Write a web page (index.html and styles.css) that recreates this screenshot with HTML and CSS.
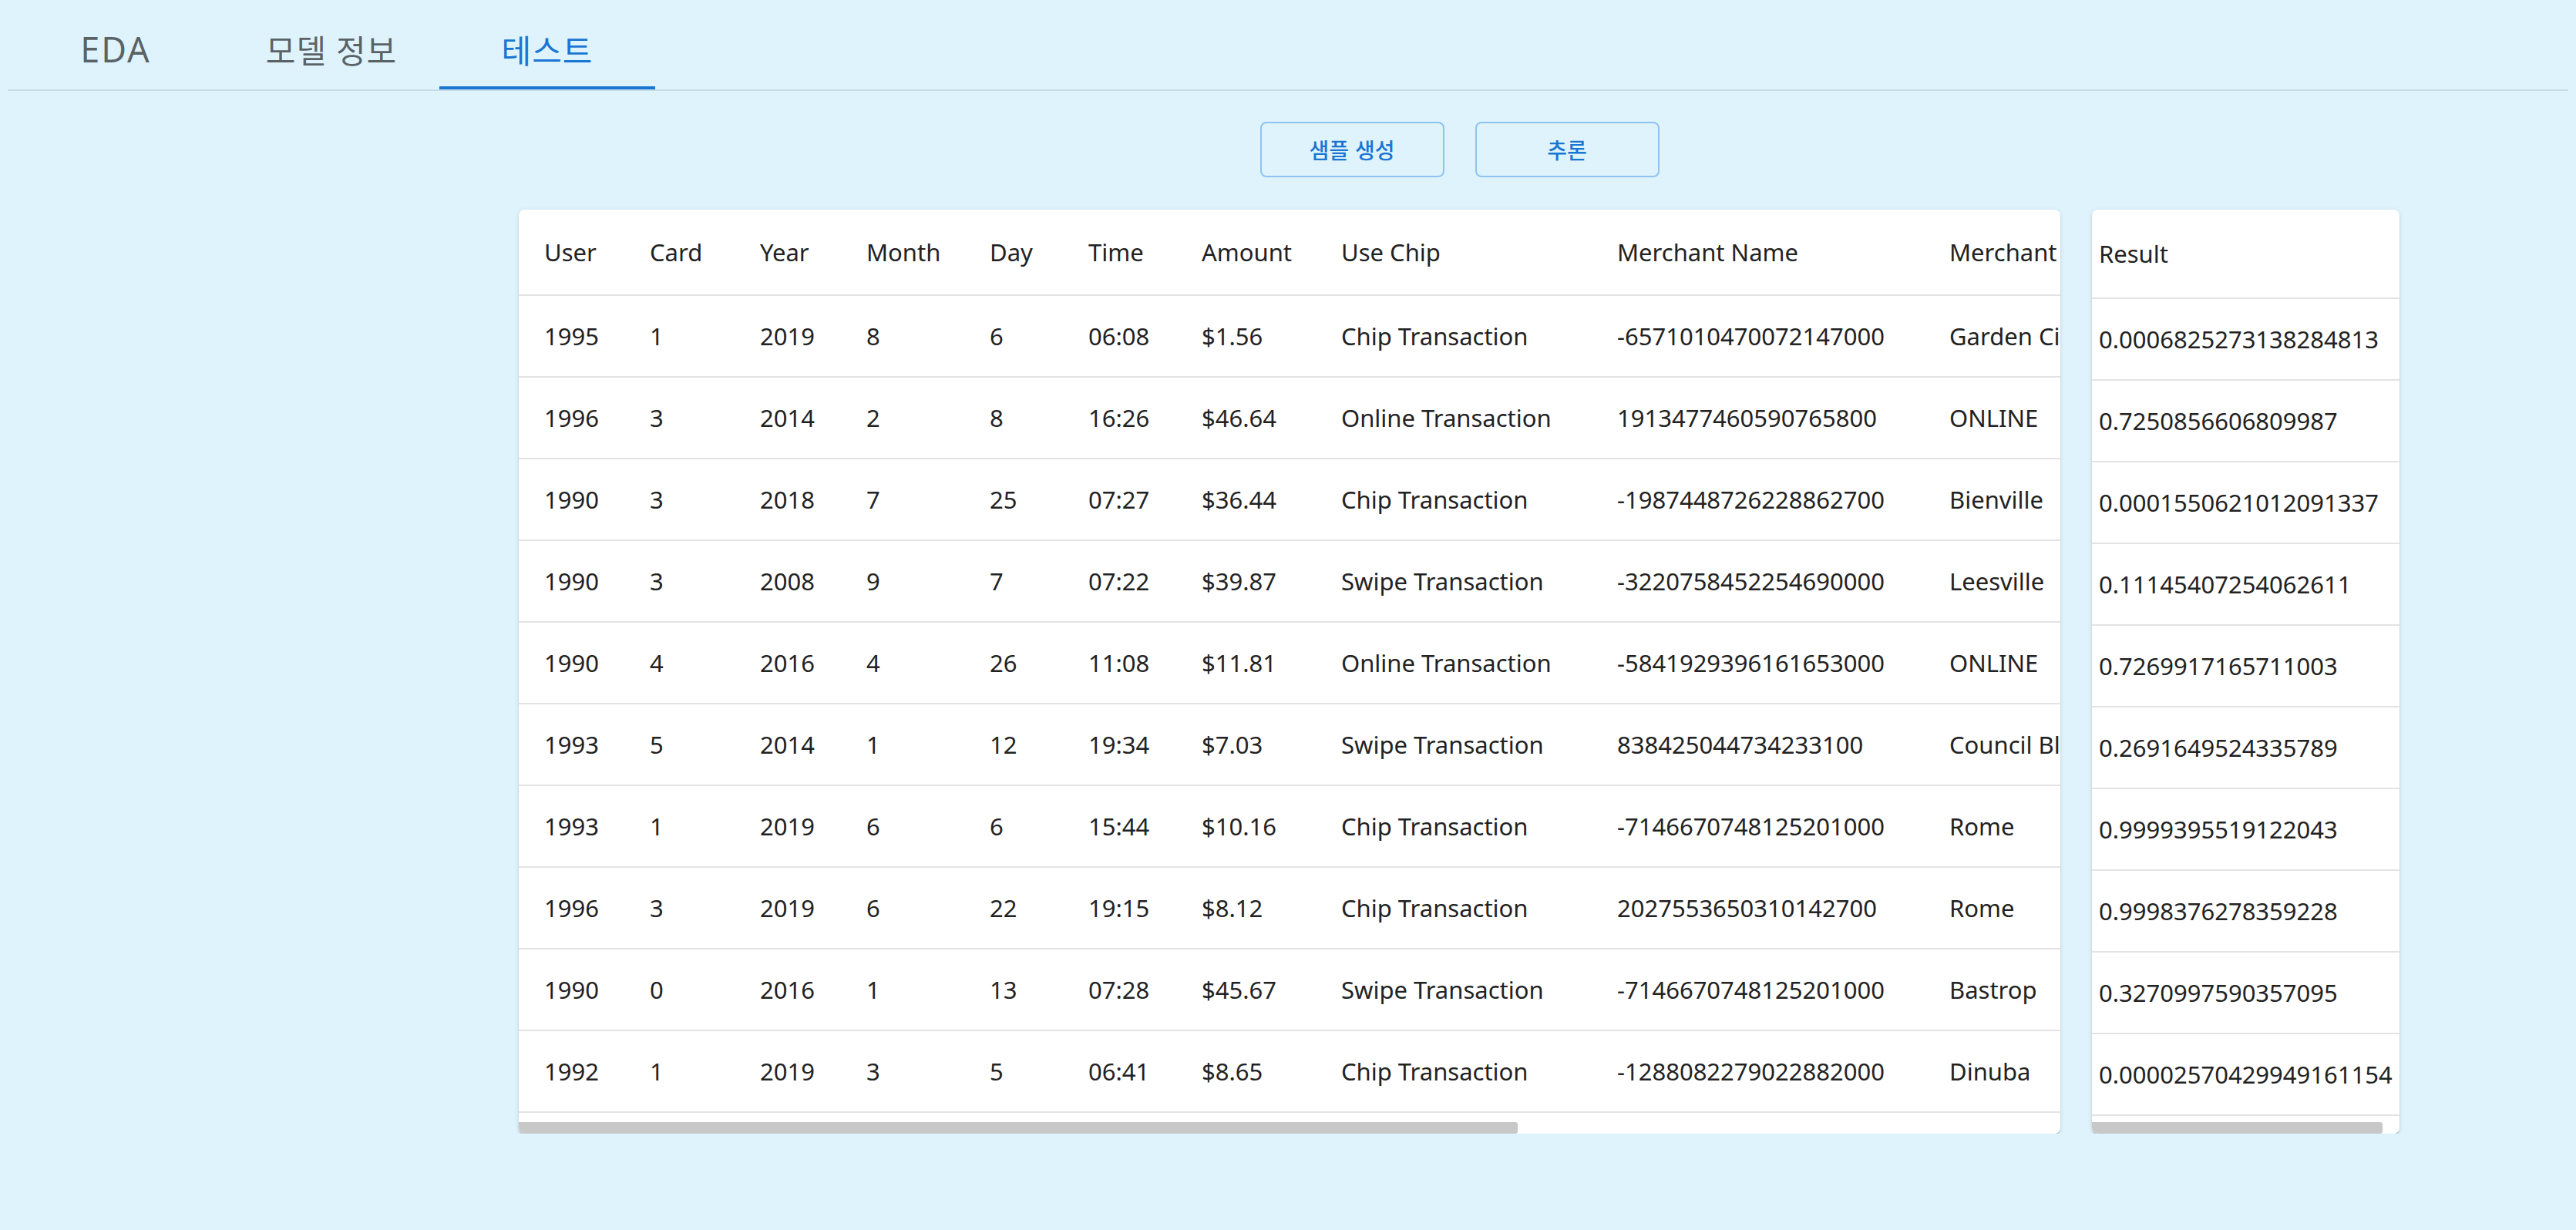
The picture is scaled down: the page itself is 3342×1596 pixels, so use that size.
FILE: index.html
```html
<!DOCTYPE html>
<html lang="ko">
<head>
<meta charset="utf-8">
<title>테스트</title>
<link rel="stylesheet" href="styles.css">
</head>
<body>
<nav class="tabs">
  <div class="tab latin">EDA</div>
  <div class="tab">모델 정보</div>
  <div class="tab active">테스트</div>
</nav>
<main class="content">
  <div class="actions">
    <button class="btn">샘플 생성</button>
    <button class="btn">추론</button>
  </div>
  <div class="panels">
    <section class="card data-card">
      <div class="scroller">
        <div class="grid">
          <div class="row head">
            <div class="cell">User</div><div class="cell">Card</div><div class="cell">Year</div><div class="cell">Month</div><div class="cell">Day</div><div class="cell">Time</div><div class="cell">Amount</div><div class="cell">Use Chip</div><div class="cell">Merchant Name</div><div class="cell">Merchant City</div>
          </div>
          <div class="row">
            <div class="cell">1995</div><div class="cell">1</div><div class="cell">2019</div><div class="cell">8</div><div class="cell">6</div><div class="cell">06:08</div><div class="cell">$1.56</div><div class="cell">Chip Transaction</div><div class="cell">-6571010470072147000</div><div class="cell">Garden City</div>
          </div>
          <div class="row">
            <div class="cell">1996</div><div class="cell">3</div><div class="cell">2014</div><div class="cell">2</div><div class="cell">8</div><div class="cell">16:26</div><div class="cell">$46.64</div><div class="cell">Online Transaction</div><div class="cell">1913477460590765800</div><div class="cell">ONLINE</div>
          </div>
          <div class="row">
            <div class="cell">1990</div><div class="cell">3</div><div class="cell">2018</div><div class="cell">7</div><div class="cell">25</div><div class="cell">07:27</div><div class="cell">$36.44</div><div class="cell">Chip Transaction</div><div class="cell">-1987448726228862700</div><div class="cell">Bienville</div>
          </div>
          <div class="row">
            <div class="cell">1990</div><div class="cell">3</div><div class="cell">2008</div><div class="cell">9</div><div class="cell">7</div><div class="cell">07:22</div><div class="cell">$39.87</div><div class="cell">Swipe Transaction</div><div class="cell">-3220758452254690000</div><div class="cell">Leesville</div>
          </div>
          <div class="row">
            <div class="cell">1990</div><div class="cell">4</div><div class="cell">2016</div><div class="cell">4</div><div class="cell">26</div><div class="cell">11:08</div><div class="cell">$11.81</div><div class="cell">Online Transaction</div><div class="cell">-5841929396161653000</div><div class="cell">ONLINE</div>
          </div>
          <div class="row">
            <div class="cell">1993</div><div class="cell">5</div><div class="cell">2014</div><div class="cell">1</div><div class="cell">12</div><div class="cell">19:34</div><div class="cell">$7.03</div><div class="cell">Swipe Transaction</div><div class="cell">838425044734233100</div><div class="cell">Council Bluffs</div>
          </div>
          <div class="row">
            <div class="cell">1993</div><div class="cell">1</div><div class="cell">2019</div><div class="cell">6</div><div class="cell">6</div><div class="cell">15:44</div><div class="cell">$10.16</div><div class="cell">Chip Transaction</div><div class="cell">-7146670748125201000</div><div class="cell">Rome</div>
          </div>
          <div class="row">
            <div class="cell">1996</div><div class="cell">3</div><div class="cell">2019</div><div class="cell">6</div><div class="cell">22</div><div class="cell">19:15</div><div class="cell">$8.12</div><div class="cell">Chip Transaction</div><div class="cell">2027553650310142700</div><div class="cell">Rome</div>
          </div>
          <div class="row">
            <div class="cell">1990</div><div class="cell">0</div><div class="cell">2016</div><div class="cell">1</div><div class="cell">13</div><div class="cell">07:28</div><div class="cell">$45.67</div><div class="cell">Swipe Transaction</div><div class="cell">-7146670748125201000</div><div class="cell">Bastrop</div>
          </div>
          <div class="row">
            <div class="cell">1992</div><div class="cell">1</div><div class="cell">2019</div><div class="cell">3</div><div class="cell">5</div><div class="cell">06:41</div><div class="cell">$8.65</div><div class="cell">Chip Transaction</div><div class="cell">-1288082279022882000</div><div class="cell">Dinuba</div>
          </div>
        </div>
      </div>
      <div class="hscroll"><div class="thumb" style="width: 1296px"></div></div>
    </section>
    <section class="card result-card">
      <div class="scroller">
        <div class="rgrid">
          <div class="rrow head">Result</div>
          <div class="rrow">0.0006825273138284813</div>
          <div class="rrow">0.7250856606809987</div>
          <div class="rrow">0.0001550621012091337</div>
          <div class="rrow">0.11145407254062611</div>
          <div class="rrow">0.7269917165711003</div>
          <div class="rrow">0.2691649524335789</div>
          <div class="rrow">0.9999395519122043</div>
          <div class="rrow">0.9998376278359228</div>
          <div class="rrow">0.3270997590357095</div>
          <div class="rrow">0.00002570429949161154</div>
        </div>
      </div>
      <div class="hscroll"><div class="thumb" style="width: 377px"></div></div>
    </section>
  </div>
</main>
</body>
</html>
```

FILE: styles.css
```css
html, body {
  margin: 0;
  padding: 0;
}

body {
  background: #dff3fd;
  font-family: "Noto Sans", "Noto Sans CJK KR", sans-serif;
  color: #222;
}

.tabs {
  display: flex;
  margin: 0 10px;
  height: 116px;
  border-bottom: 2px solid #c7dce6;
}

.tab {
  position: relative;
  width: 280px;
  box-sizing: border-box;
  padding-top: 10px;
  display: flex;
  align-items: center;
  justify-content: center;
  font-family: "Noto Sans", "Noto Sans CJK KR", sans-serif;
  font-size: 42px;
  letter-spacing: 1px;
  color: rgba(0, 0, 0, 0.6);
}

.tab.latin {
  font-size: 45px;
  letter-spacing: 2px;
}

.tab.active {
  color: #1976d2;
}

.tab.active::after {
  content: "";
  position: absolute;
  left: 0;
  right: 0;
  bottom: 0;
  height: 4px;
  background: #1976d2;
}

.content {
  margin-left: 673px;
  width: 2441px;
  padding-top: 40px;
}

.actions {
  display: flex;
  justify-content: center;
  gap: 40px;
}

.btn {
  width: 239px;
  height: 72px;
  box-sizing: border-box;
  border: 2px solid #8ec3ef;
  border-radius: 8px;
  background: transparent;
  color: #1976d2;
  font-family: "Noto Sans CJK KR", sans-serif;
  font-weight: 500;
  font-size: 28px;
  padding: 0;
}

.panels {
  display: flex;
  align-items: flex-start;
  gap: 41px;
  margin-top: 42px;
}

.card {
  background: #fff;
  border-radius: 8px;
  overflow: hidden;
  box-shadow: 0 3px 2px -2px rgba(0, 0, 0, 0.2), 0 2px 2px 0 rgba(0, 0, 0, 0.14), 0 1px 6px 0 rgba(0, 0, 0, 0.1);
}

.data-card {
  width: 2000px;
}

.result-card {
  width: 399px;
}

.scroller {
  overflow: hidden;
}

.hscroll {
  height: 15px;
  background: #fff;
}

.thumb {
  height: 100%;
  background: #c8c8c8;
  border-radius: 0 3px 3px 0;
}

.grid {
  width: 3086px;
  padding-bottom: 12px;
}

.row {
  display: grid;
  grid-template-columns: 137px 143px 138px 160px 128px 147px 181px 358px 431px 1263px;
  height: 106px;
  box-sizing: border-box;
  border-bottom: 2px solid #e3e3e3;
  align-items: center;
}

.row.head {
  height: 112px;
}

.cell {
  padding-left: 33px;
  white-space: nowrap;
  font-size: 31px;
  color: #222;
}

.rgrid {
  width: 422px;
  padding-bottom: 8px;
}

.rrow {
  height: 106px;
  box-sizing: border-box;
  border-bottom: 2px solid #e3e3e3;
  display: flex;
  align-items: center;
  padding-left: 9px;
  white-space: nowrap;
  font-size: 31px;
  color: #222;
}

.rrow.head {
  height: 116px;
}
```
